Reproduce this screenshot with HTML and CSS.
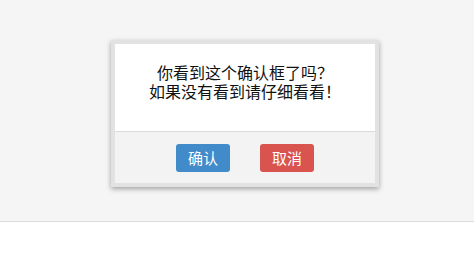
FILE: index.html
```html
<!DOCTYPE html>
<html lang="zh">
<head>
<meta charset="utf-8">
<title>确认框</title>
<link rel="stylesheet" href="styles.css">
</head>
<body>
<div class="stage">
  <div class="dialog">
    <div class="dialog-body">
      <p class="msg"><span class="line">你看到这个确认框了吗？</span><span class="line">如果没有看到请仔细看看！</span></p>
    </div>
    <div class="dialog-footer">
      <button class="btn btn-ok">确认</button>
      <button class="btn btn-cancel">取消</button>
    </div>
  </div>
</div>
</body>
</html>
```
FILE: styles.css
```css
html, body {
  margin: 0;
  padding: 0;
  background: #fff;
  font-family: "Noto Sans CJK SC", "Liberation Sans", sans-serif;
}
.stage {
  height: 181px;
  padding-top: 40px;
  background: #f5f5f5;
  border-bottom: 1px solid #dcdcdc;
}
.dialog {
  margin-left: 111px;
  width: 260px;
  border: 4px solid #e2e2e2;
  box-shadow: 0 2px 5px rgba(0, 0, 0, 0.35);
}
.dialog-body {
  background: #fff;
  height: 87px;
  border-bottom: 1px solid #dadada;
  display: flex;
  align-items: center;
  justify-content: center;
}
.msg {
  margin: 0;
  display: flex;
  flex-direction: column;
  align-items: center;
  font-size: 16px;
  line-height: 19px;
  color: #111;
  padding-bottom: 12px;
}
.line {
  display: block;
  white-space: nowrap;
}
.dialog-footer {
  background: #f3f3f3;
  height: 51px;
  display: flex;
  align-items: center;
  justify-content: center;
  gap: 30px;
}
.btn {
  width: 54px;
  height: 28px;
  border: none;
  border-radius: 3px;
  color: #fff;
  font-family: "Noto Sans CJK SC", sans-serif;
  font-size: 15px;
  padding: 0;
}
.btn-ok { background: #428bca; }
.btn-cancel { background: #d9534f; }
```
